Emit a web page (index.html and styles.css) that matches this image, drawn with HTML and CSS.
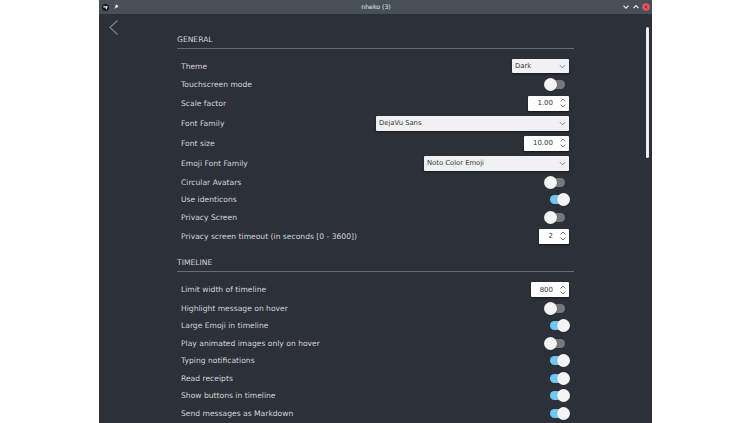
FILE: index.html
```html
<!DOCTYPE html>
<html lang="en">
<head>
<meta charset="utf-8">
<title>nheko (3)</title>
<link rel="stylesheet" href="styles.css">
</head>
<body>
<main class="window">
  <header class="titlebar">
    <div class="tb-left">
      <svg class="app-icon" viewBox="0 0 8 8"><circle cx="4" cy="4" r="4" fill="#17181a"/><path d="M1.500 2.600h5v1.300h-1v2h-1.200v-2H1.500z" fill="#f2f2f2"/></svg>
      <svg class="pin-icon" viewBox="0 0 6 6"><path d="M1 5 2.400 3 2 2.300 3.700.6 5.400 2.300 3.700 4 3 3.600z" fill="#f4f4f4"/></svg>
    </div>
    <div class="tb-title">nheko (3)</div>
    <div class="tb-right">
      <svg class="wb" viewBox="0 0 8 8"><path d="M1.500 2.700 4 5.200 6.500 2.700" fill="none" stroke="#e8ecec" stroke-width="1.200"/></svg>
      <svg class="wb" viewBox="0 0 8 8"><path d="M1.500 5.200 4 2.700 6.500 5.200" fill="none" stroke="#e8ecec" stroke-width="1.200"/></svg>
      <svg class="wb" viewBox="0 0 8 8"><circle cx="4" cy="4" r="3.800" fill="#ec4f62"/><path d="M2.500 2.500 5.500 5.500M5.500 2.500 2.500 5.500" stroke="#7d2733" stroke-width=".8"/></svg>
    </div>
  </header>
  <div class="content">
    <aside class="back-col">
      <svg class="back" viewBox="0 0 9 15"><path d="M8.500 .5 1 7.500 8.500 14.500" fill="none" stroke="#7f8388" stroke-width="1.200"/></svg>
    </aside>
    <div class="settings">
      <h2 class="section first">GENERAL</h2>
      <div class="row h18 top"><span>Theme</span><div class="select theme"><span>Dark</span><svg class="chev" viewBox="0 0 8 5"><path d="M1 1 4 4 7 1"/></svg></div></div>
      <div class="row h18"><span>Touchscreen mode</span><div class="toggle off"><i></i></div></div>
      <div class="row h20"><span>Scale factor</span><div class="spin w41"><span>1.00</span><svg class="updown" viewBox="0 0 6 10"><path d="M.5 3.500 3 1 5.500 3.500M.5 6.500 3 9 5.500 6.500"/></svg></div></div>
      <div class="row h20"><span>Font Family</span><div class="select font"><span>DejaVu Sans</span><svg class="chev" viewBox="0 0 8 5"><path d="M1 1 4 4 7 1"/></svg></div></div>
      <div class="row h20"><span>Font size</span><div class="spin w45"><span>10.00</span><svg class="updown" viewBox="0 0 6 10"><path d="M.5 3.500 3 1 5.500 3.500M.5 6.500 3 9 5.500 6.500"/></svg></div></div>
      <div class="row h20"><span>Emoji Font Family</span><div class="select emoji"><span>Noto Color Emoji</span><svg class="chev" viewBox="0 0 8 5"><path d="M1 1 4 4 7 1"/></svg></div></div>
      <div class="row h18"><span>Circular Avatars</span><div class="toggle off"><i></i></div></div>
      <div class="row h175"><span>Use identicons</span><div class="toggle on"><i></i></div></div>
      <div class="row h175"><span>Privacy Screen</span><div class="toggle off"><i></i></div></div>
      <div class="row h20"><span>Privacy screen timeout (in seconds [0 - 3600])</span><div class="spin w30"><span>2</span><svg class="updown" viewBox="0 0 6 10"><path d="M.5 3.500 3 1 5.500 3.500M.5 6.500 3 9 5.500 6.500"/></svg></div></div>
      <h2 class="section second">TIMELINE</h2>
      <div class="row h20 top2"><span>Limit width of timeline</span><div class="spin w38"><span>800</span><svg class="updown" viewBox="0 0 6 10"><path d="M.5 3.500 3 1 5.500 3.500M.5 6.500 3 9 5.500 6.500"/></svg></div></div>
      <div class="row h175"><span>Highlight message on hover</span><div class="toggle off"><i></i></div></div>
      <div class="row h175"><span>Large Emoji in timeline</span><div class="toggle on"><i></i></div></div>
      <div class="row h175"><span>Play animated images only on hover</span><div class="toggle off"><i></i></div></div>
      <div class="row h175"><span>Typing notifications</span><div class="toggle on"><i></i></div></div>
      <div class="row h175"><span>Read receipts</span><div class="toggle on"><i></i></div></div>
      <div class="row h175"><span>Show buttons in timeline</span><div class="toggle on"><i></i></div></div>
      <div class="row h175"><span>Send messages as Markdown</span><div class="toggle on"><i></i></div></div>
    </div>
    <div class="scroll-col"><div class="scrollbar"></div></div>
  </div>
</main>
</body>
</html>
```
FILE: styles.css
```css
* { box-sizing: border-box; }
html, body { margin: 0; height: 100%; background: #fff; overflow: hidden; }
body { display: flex; justify-content: center; font-family: "DejaVu Sans", sans-serif; text-rendering: geometricPrecision; }
.window { width: 553px; height: 423px; margin-left: -1px; background: #2c3039; color: #d3d4d8; display: flex; flex-direction: column; overflow: hidden; }
.titlebar { flex: 0 0 14px; background: #475057; display: flex; align-items: center; padding: 0 2px 0 3px; font-size: 6.2px; color: #e6e8e8; }
.tb-left { display: flex; align-items: center; gap: 4px; width: 100px; }
.app-icon { width: 7px; height: 7px; }
.pin-icon { width: 6px; height: 6px; }
.tb-title { flex: 1; text-align: center; }
.tb-right { display: flex; align-items: center; justify-content: flex-end; gap: 2px; width: 100px; }
.wb { width: 8px; height: 8px; }
.content { flex: 1; display: flex; min-height: 0; }
.back-col { flex: 0 0 78px; padding: 6px 0 0 10px; }
.back { width: 9px; height: 15px; display: block; }
.settings { flex: 0 0 397px; }
.section { margin: 0; font-size: 7.6px; font-weight: 400; color: #d3d4d8; border-bottom: 1px solid #6a6c72; display: flex; align-items: flex-end; padding-bottom: 4px; }
.section.first { height: 35px; }
.section.second { height: 26px; }
.row { display: flex; justify-content: space-between; align-items: center; padding: 0 5px 0 4px; font-size: 7.6px; }
.row.top { margin-top: 8px; }
.row.top2 { margin-top: 7.5px; }
.h18 { height: 18px; }
.h175 { height: 17.5px; }
.h20 { height: 20px; }
.select, .spin { height: 15px; background: #f1f1f3; color: #33363c; border-radius: 1px; box-shadow: 0 1px 2px rgba(0,0,0,.6); display: flex; align-items: center; justify-content: space-between; }
.select { padding: 0 3px; font-size: 6.8px; }
.spin { background: #fff; padding: 0 2px 0 0; font-size: 7px; }
.spin span { flex: 1; text-align: right; padding-right: 7px; }
.theme { width: 57px; height: 14px; }
.font { width: 193px; }
.emoji { width: 145px; }
.w41 { width: 41px; }
.w45 { width: 45px; }
.w30 { width: 30px; }
.w38 { width: 38px; }
.chev { width: 7px; height: 5px; fill: none; stroke: #6a6d72; stroke-width: 1; }
.updown { width: 6px; height: 10px; flex: none; fill: none; stroke: #6a6d72; stroke-width: .9; margin-right: 1px; }
.toggle { height: 9px; border-radius: 4.500px; position: relative; }
.toggle i { position: absolute; top: -2px; width: 13px; height: 13px; border-radius: 50%; background: #f4f4f4; box-shadow: 0 0 1px rgba(0,0,0,.4); }
.toggle.off { width: 15px; margin-right: 4px; background: #77787a; }
.toggle.off i { left: -6px; }
.toggle.on { width: 18px; margin-right: 1px; background: #6ec9f5; }
.toggle.on i { right: -2px; }
.scroll-col { flex: 1; display: flex; justify-content: flex-end; padding: 13px 3px 0 0; }
.scrollbar { width: 3px; height: 131px; background: #eceef0; border-radius: 2px; }
```
